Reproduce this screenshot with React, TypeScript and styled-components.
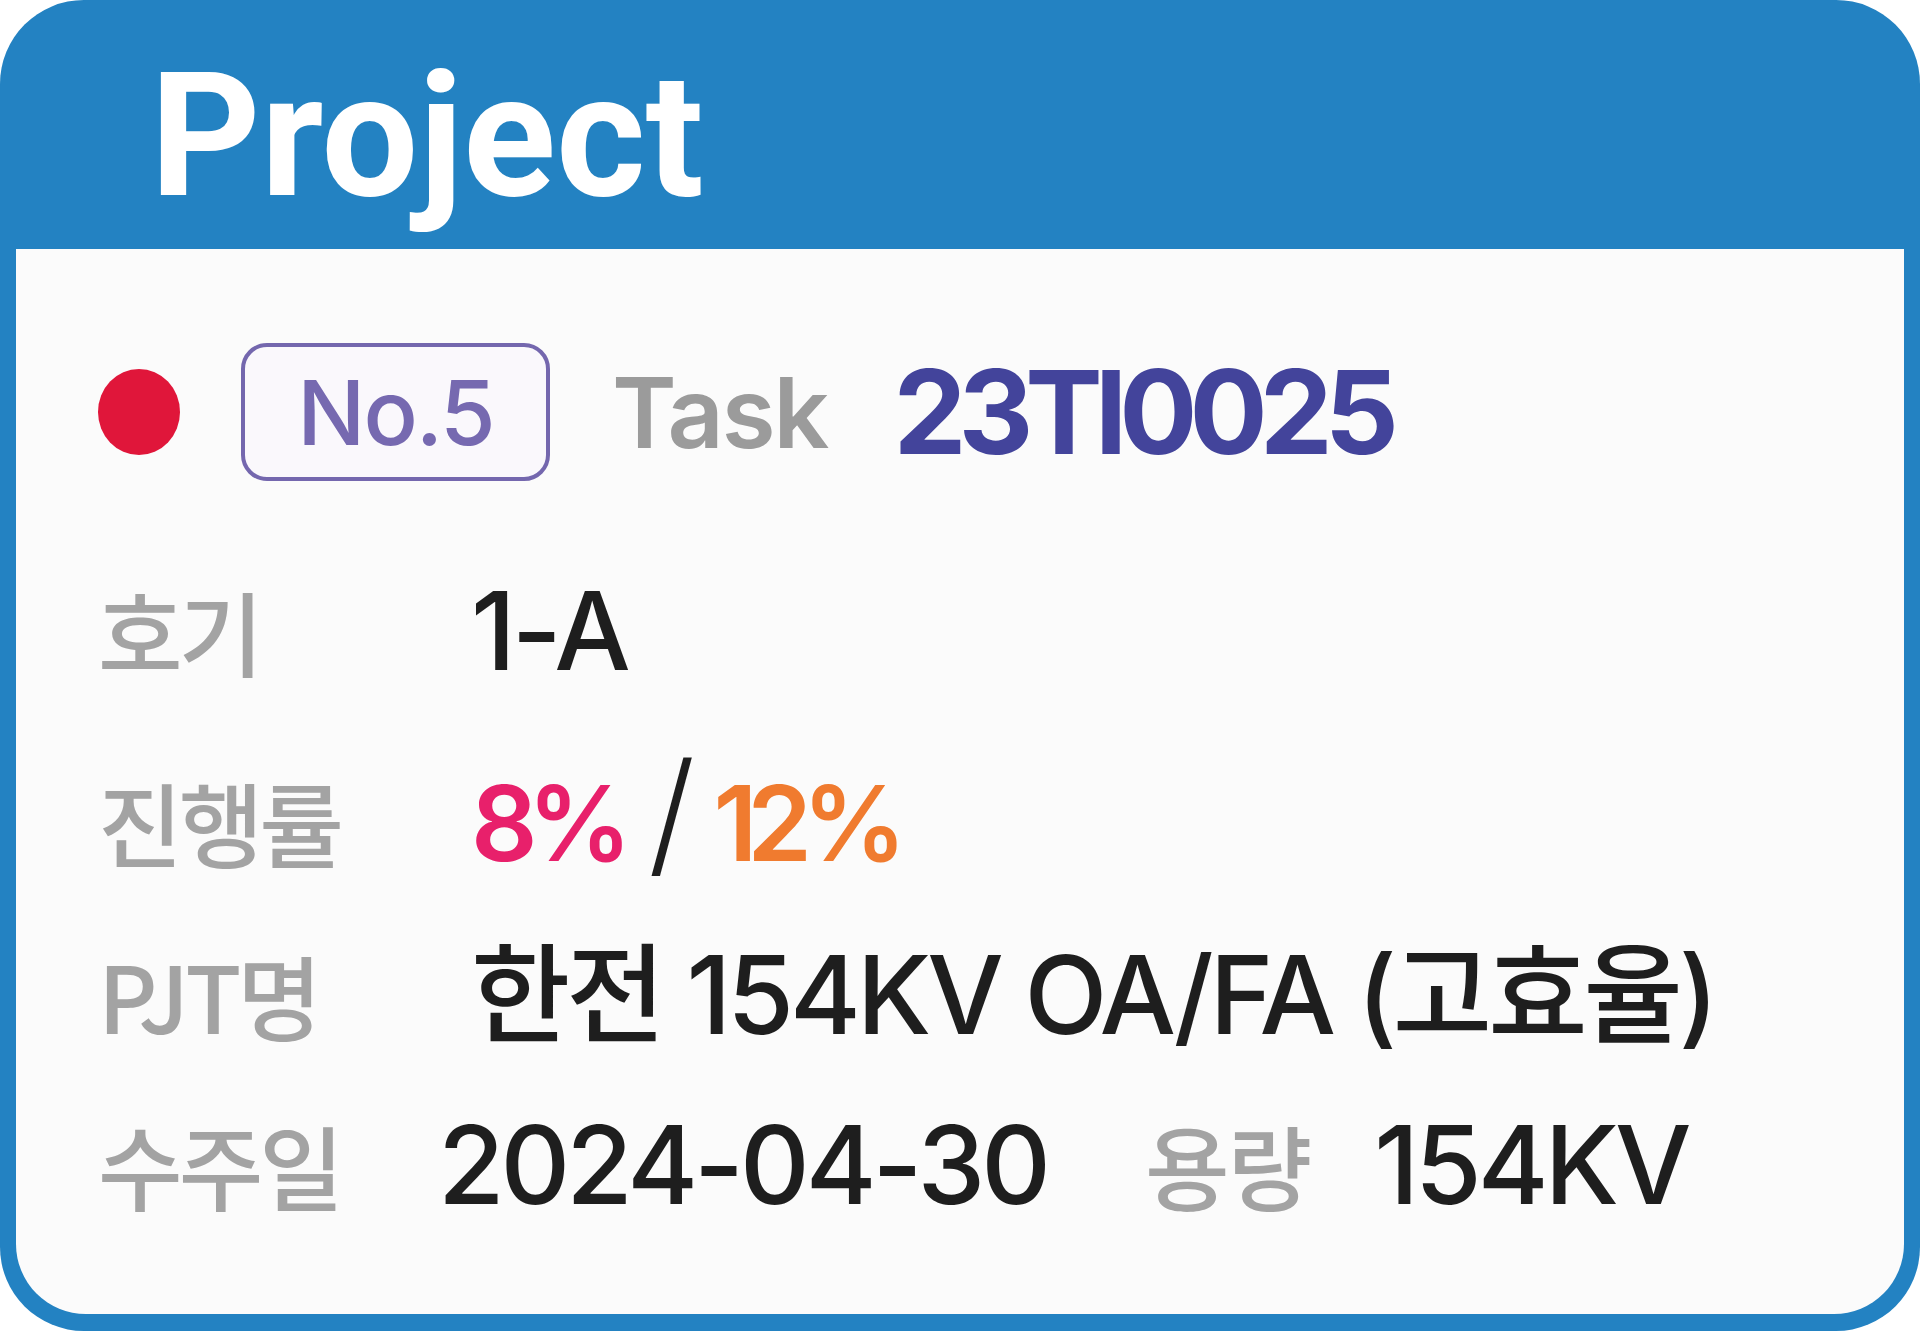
import styled, { createGlobalStyle } from "styled-components";

const GlobalStyle = createGlobalStyle`
  html, body {
    margin: 0;
    padding: 0;
    background: #ffffff;
  }
  * {
    box-sizing: border-box;
  }
`;

const Card = styled.div`
  width: 1920px;
  height: 1331px;
  background: #2382c2;
  border-radius: 84px;
  display: flex;
  flex-direction: column;
  overflow: hidden;
`;

const Header = styled.div`
  height: 249px;
  flex-shrink: 0;
  padding: 50px 0 0 150px;
  font-family: Roboto, "Liberation Sans", sans-serif;
  font-weight: 700;
  font-size: 172px;
  line-height: 1;
  color: #ffffff;
`;

const Body = styled.div`
  flex: 1;
  margin: 0 16px 17px 16px;
  background: #fbfbfb;
  border-radius: 0 0 70px 70px;
  padding: 94px 0 0 82px;
  display: flex;
  flex-direction: column;
  font-family: Inter, "Noto Sans CJK KR", sans-serif;
`;

const TopRow = styled.div`
  display: flex;
  align-items: center;
  height: 138px;
  margin-bottom: 58px;
`;

const Dot = styled.div`
  width: 82px;
  height: 86px;
  border-radius: 50%;
  background: #e0163a;
  margin-right: 61px;
`;

const Badge = styled.div`
  width: 309px;
  height: 138px;
  border: 4px solid #7467ae;
  border-radius: 26px;
  background: #faf8fc;
  color: #7669b0;
  font-size: 90px;
  font-weight: 500;
  letter-spacing: -2px;
  display: flex;
  align-items: center;
  justify-content: center;
  margin-right: 62px;
`;

const TaskLabel = styled.span`
  color: #9b9b9b;
  font-size: 98px;
  font-weight: 600;
  letter-spacing: -2px;
  margin-right: 66px;
`;

const TaskId = styled.span`
  color: #43449b;
  font-size: 116px;
  font-weight: 700;
  letter-spacing: -8px;
`;

const Row = styled.div<{ $shift?: number }>`
  display: flex;
  align-items: baseline;
  height: 182px;
  line-height: 182px;
  margin-top: ${({ $shift }) => ($shift ? `${$shift}px` : "0")};
`;

const Label = styled.span<{ $w?: number }>`
  width: ${({ $w }) => ($w ? `${$w}px` : "373px")};
  flex-shrink: 0;
  color: #a3a3a3;
  font-family: "Noto Sans CJK KR", Inter, sans-serif;
  font-size: 92px;
  font-weight: 500;
  letter-spacing: -4px;
`;

const Value = styled.span<{ $color?: string }>`
  color: ${({ $color }) => $color || "#1e1e1e"};
  font-size: 108px;
  font-weight: 500;
  letter-spacing: -4px;
  white-space: nowrap;
`;

const Percent = styled.span<{ $color: string }>`
  color: ${({ $color }) => $color};
  font-size: 104px;
  font-weight: 600;
  letter-spacing: -10px;
`;

const Slash = styled.span`
  display: inline-block;
  margin: 0 22px 0 26px;
  color: #1e1e1e;
  font-size: 136px;
  font-weight: 300;
`;

const Sub = styled.span`
  color: #a3a3a3;
  font-family: "Noto Sans CJK KR", Inter, sans-serif;
  font-size: 92px;
  font-weight: 500;
  letter-spacing: -2px;
  margin: 0 64px 0 98px;
`;

const App = () => {
  return (
    <>
      <GlobalStyle />
      <Card>
        <Header>Project</Header>
        <Body>
          <TopRow>
            <Dot />
            <Badge>No.5</Badge>
            <TaskLabel>Task</TaskLabel>
            <TaskId>23TI0025</TaskId>
          </TopRow>
          <Row>
            <Label>호기</Label>
            <Value>1-A</Value>
          </Row>
          <Row>
            <Label>진행률</Label>
            <Value>
              <Percent $color="#e8206b">8%</Percent>
              <Slash>/</Slash>
              <Percent $color="#f07b2f">12%</Percent>
            </Value>
          </Row>
          <Row>
            <Label>PJT명</Label>
            <Value>한전 154KV OA/FA (고효율)</Value>
          </Row>
          <Row $shift={-12}>
            <Label $w={340}>수주일</Label>
            <Value>2024-04-30</Value>
            <Sub>용량</Sub>
            <Value>154KV</Value>
          </Row>
        </Body>
      </Card>
    </>
  );
};

export default App;
